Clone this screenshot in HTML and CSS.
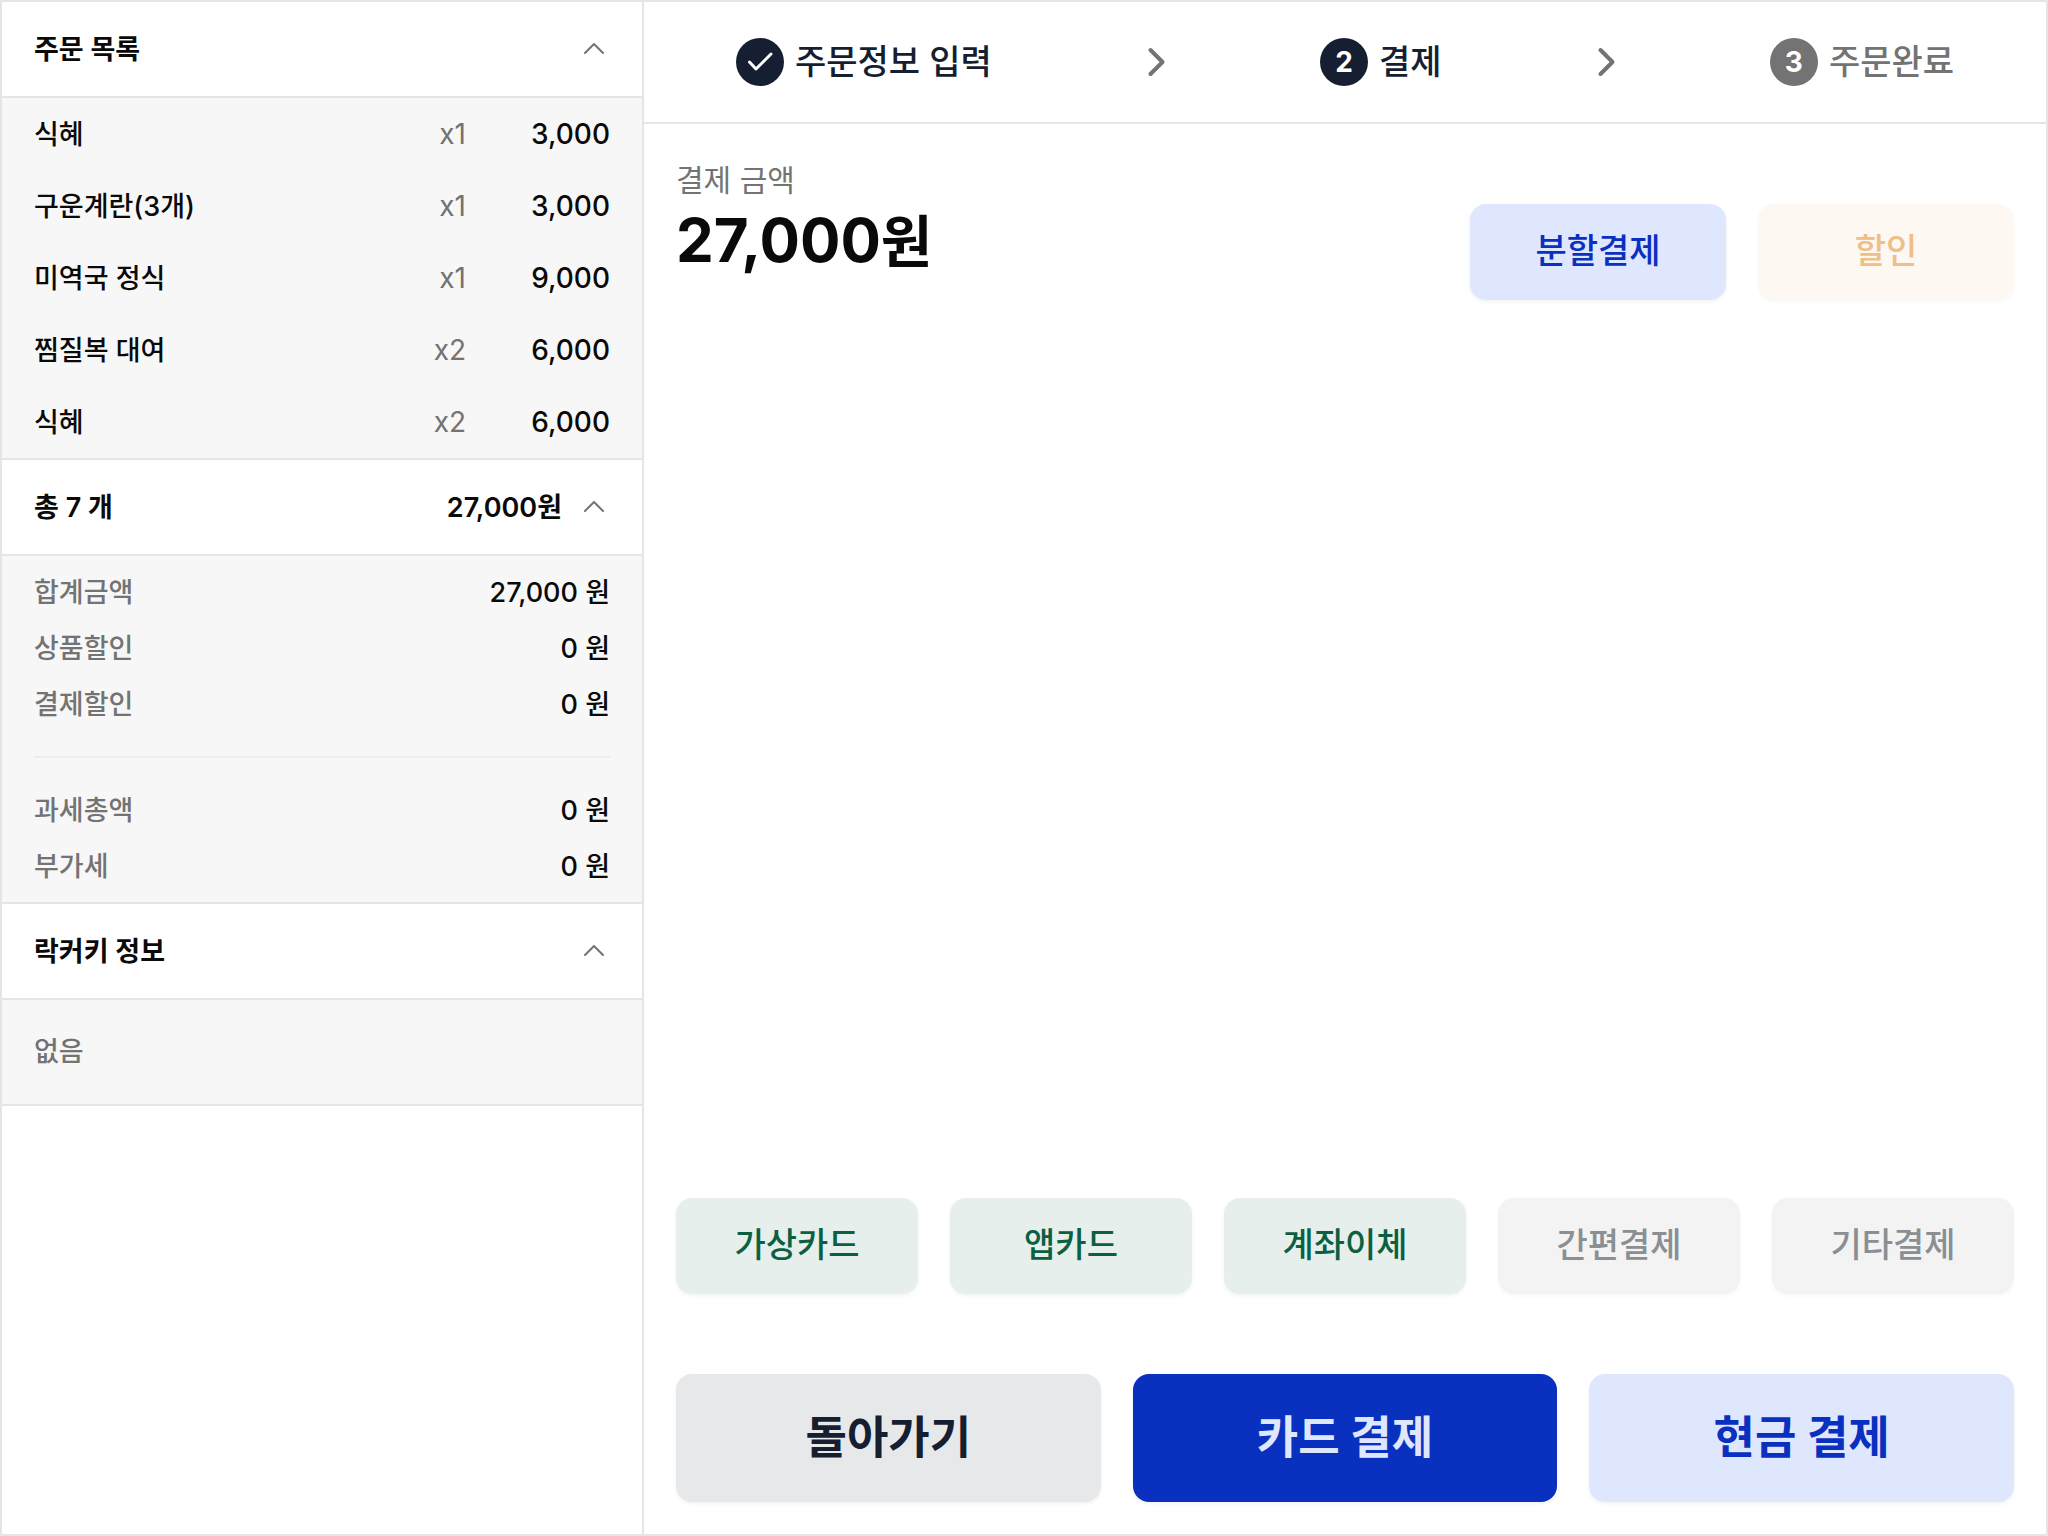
FILE: index.html
```html
<!DOCTYPE html>
<html lang="ko">

<head>
    <meta charset="UTF-8">
    <meta name="viewport" content="width=device-width, initial-scale=1.0">
    <title>결제</title>
    <link rel="stylesheet" href="styles.css">
</head>

<body>
    <div class="app">
        <aside class="sidebar">
            <section>
                <button class="panel-header" type="button" aria-expanded="true">
                    <span>주문 목록</span>
                    <svg class="arrow-up" viewBox="0 0 32 32" aria-hidden="true"><path d="M7 20 L16 11 L25 20" /></svg>
                </button>
                <table class="order-list">
                    <tr>
                        <td>식혜</td>
                        <td class="qty">x1</td>
                        <td class="price">3,000</td>
                    </tr>
                    <tr>
                        <td>구운계란(3개)</td>
                        <td class="qty">x1</td>
                        <td class="price">3,000</td>
                    </tr>
                    <tr>
                        <td>미역국 정식</td>
                        <td class="qty">x1</td>
                        <td class="price">9,000</td>
                    </tr>
                    <tr>
                        <td>찜질복 대여</td>
                        <td class="qty">x2</td>
                        <td class="price">6,000</td>
                    </tr>
                    <tr>
                        <td>식혜</td>
                        <td class="qty">x2</td>
                        <td class="price">6,000</td>
                    </tr>
                </table>
            </section>

            <section>
                <button class="panel-header" type="button" aria-expanded="true">
                    <span>총 7 개</span>
                    <span class="header-total">27,000원</span>
                    <svg class="arrow-up" viewBox="0 0 32 32" aria-hidden="true"><path d="M7 20 L16 11 L25 20" /></svg>
                </button>
                <div class="summary">
                    <dl>
                        <div class="summary-row"><dt>합계금액</dt><dd>27,000 원</dd></div>
                        <div class="summary-row"><dt>상품할인</dt><dd>0 원</dd></div>
                        <div class="summary-row"><dt>결제할인</dt><dd>0 원</dd></div>
                    </dl>
                    <hr>
                    <dl>
                        <div class="summary-row"><dt>과세총액</dt><dd>0 원</dd></div>
                        <div class="summary-row"><dt>부가세</dt><dd>0 원</dd></div>
                    </dl>
                </div>
            </section>

            <section>
                <button class="panel-header" type="button" aria-expanded="true">
                    <span>락커키 정보</span>
                    <svg class="arrow-up" viewBox="0 0 32 32" aria-hidden="true"><path d="M7 20 L16 11 L25 20" /></svg>
                </button>
                <p class="empty">없음</p>
            </section>
        </aside>

        <div class="content">
            <header class="steps">
                <div class="step">
                    <span class="badge">
                        <svg viewBox="0 0 48 48" aria-hidden="true"><path d="M13.5 24 L20 31 L35 16" /></svg>
                    </span>
                    <span class="step-name">주문정보 입력</span>
                </div>
                <svg class="arrow-right" viewBox="0 0 48 48" aria-hidden="true"><path d="M18.5 12 L30.5 24 L18.5 36" /></svg>
                <div class="step">
                    <span class="badge">2</span>
                    <span class="step-name">결제</span>
                </div>
                <svg class="arrow-right" viewBox="0 0 48 48" aria-hidden="true"><path d="M18.5 12 L30.5 24 L18.5 36" /></svg>
                <div class="step pending">
                    <span class="badge">3</span>
                    <span class="step-name">주문완료</span>
                </div>
            </header>

            <main class="payment">
                <div class="amount-row">
                    <div>
                        <div class="amount-label">결제 금액</div>
                        <div class="amount">27,000<span>원</span></div>
                    </div>
                    <div class="amount-actions">
                        <button class="btn btn-light" type="button">분할결제</button>
                        <button class="btn btn-discount" type="button" disabled>할인</button>
                    </div>
                </div>

                <div class="methods">
                    <button class="btn btn-green" type="button">가상카드</button>
                    <button class="btn btn-green" type="button">앱카드</button>
                    <button class="btn btn-green" type="button">계좌이체</button>
                    <button class="btn btn-gray" type="button" disabled>간편결제</button>
                    <button class="btn btn-gray" type="button" disabled>기타결제</button>
                </div>

                <div class="main-actions">
                    <button class="btn btn-large btn-back" type="button">돌아가기</button>
                    <button class="btn btn-large btn-primary" type="button">카드 결제</button>
                    <button class="btn btn-large btn-light" type="button">현금 결제</button>
                </div>
            </main>
        </div>
    </div>
</body>

</html>
```
FILE: styles.css
```css
* {
    box-sizing: border-box;
}

body {
    margin: 0;
    font-family: Inter, "Noto Sans CJK KR", sans-serif;
    font-size: 27px;
    font-weight: 500;
    color: #0a0a0a;
    background-color: #fff;
}

button {
    font-family: inherit;
    cursor: pointer;
    border: none;
}

dl,
dd,
p {
    margin: 0;
}

.app {
    display: flex;
    min-height: 100vh;
    border: 2px solid #e5e5e5;
}

/* order sidebar */
.sidebar {
    flex: 0 0 642px;
    border-right: 2px solid #e5e5e5;
}

.panel-header {
    display: flex;
    align-items: center;
    width: 100%;
    height: 96px;
    padding: 0 32px;
    font-size: 27px;
    font-weight: 600;
    color: #0a0a0a;
    background-color: #fff;
    border-bottom: 2px solid #e5e5e5;
}

.panel-header span {
    padding-bottom: 3px;
}

.header-total {
    margin-left: auto;
}

.arrow-up {
    width: 32px;
    height: 32px;
    margin-left: auto;
    fill: none;
    stroke: #737373;
    stroke-width: 2;
    stroke-linecap: round;
    stroke-linejoin: round;
}

.header-total + .arrow-up {
    margin-left: 16px;
}

.order-list {
    width: 100%;
    border-spacing: 0;
    background-color: #f7f7f7;
    border-bottom: 2px solid #e5e5e5;
}

.order-list td {
    height: 72px;
    padding: 0;
}

.order-list td:first-child {
    padding: 0 0 4px 32px;
}

.order-list .qty {
    width: 100px;
    font-size: 28px;
    font-weight: 400;
    text-align: right;
    color: #737373;
}

.order-list .price {
    width: 176px;
    padding-right: 32px;
    font-size: 28px;
    text-align: right;
}

.summary {
    padding: 8px 32px;
    background-color: #f7f7f7;
    border-bottom: 2px solid #e5e5e5;
}

.summary-row {
    display: flex;
    align-items: center;
    justify-content: space-between;
    height: 56px;
    padding-bottom: 4px;
}

.summary-row dt {
    color: #737373;
}

.summary hr {
    height: 2px;
    margin: 24px 0;
    border: none;
    background-color: #ededed;
}

.empty {
    padding: 32px;
    line-height: 40px;
    color: #737373;
    background-color: #f7f7f7;
    border-bottom: 2px solid #e5e5e5;
}

/* steps */
.content {
    display: flex;
    flex: 1;
    flex-direction: column;
}

.steps {
    display: flex;
    align-items: center;
    justify-content: space-between;
    height: 122px;
    padding: 0 92px;
    border-bottom: 2px solid #e5e5e5;
}

.step {
    display: flex;
    align-items: center;
    gap: 11px;
    font-size: 34px;
    color: #161e31;
}

.step-name {
    padding-bottom: 5px;
}

.badge {
    display: flex;
    align-items: center;
    justify-content: center;
    width: 48px;
    height: 48px;
    font-size: 28px;
    font-weight: 700;
    color: #fff;
    background-color: #161e31;
    border-radius: 50%;
}

.badge svg {
    width: 48px;
    height: 48px;
    fill: none;
    stroke: #fff;
    stroke-width: 3;
    stroke-linecap: round;
    stroke-linejoin: round;
}

.step.pending {
    color: #737373;
}

.step.pending .badge {
    background-color: #737373;
}

.arrow-right {
    width: 48px;
    height: 48px;
    fill: none;
    stroke: #737373;
    stroke-width: 4;
    stroke-linecap: round;
    stroke-linejoin: round;
}

/* payment */
.payment {
    display: flex;
    flex: 1;
    flex-direction: column;
    padding: 32px;
}

.amount-row {
    display: flex;
    justify-content: space-between;
}

.amount-label {
    font-size: 30px;
    font-weight: 400;
    line-height: 48px;
    color: #737373;
}

.amount {
    font-size: 60px;
    font-weight: 700;
    line-height: 72px;
}

.amount span {
    font-size: 56px;
}

.amount-actions {
    display: grid;
    grid-template-columns: 256px 256px;
    gap: 32px;
    margin-top: 48px;
}

.btn {
    height: 96px;
    padding: 0 0 7px;
    font-size: 34px;
    font-weight: 500;
    border-radius: 16px;
    box-shadow: 0 2px 4px rgba(0, 0, 0, 0.05);
}

.btn-light {
    color: #0a30c0;
    background-color: #dfe7ff;
}

.btn-discount {
    color: #f0be87;
    background-color: #fdf8f2;
}

.btn-green {
    color: #0b6042;
    background-color: #e6efec;
}

.btn-gray {
    color: #8a8f94;
    background-color: #f3f3f3;
}

.btn-back {
    color: #161e31;
    background-color: #e7e8ea;
}

.btn-primary {
    color: #dfe7ff;
    background-color: #0a30c0;
}

.btn:disabled {
    cursor: default;
    box-shadow: 0 2px 4px rgba(0, 0, 0, 0.03);
}

.methods {
    display: grid;
    grid-template-columns: repeat(5, 1fr);
    gap: 32px;
    margin-top: auto;
}

.main-actions {
    display: grid;
    grid-template-columns: repeat(3, 1fr);
    gap: 32px;
    margin-top: 80px;
}

.btn-large {
    height: 128px;
    font-size: 45px;
    font-weight: 700;
}
```
